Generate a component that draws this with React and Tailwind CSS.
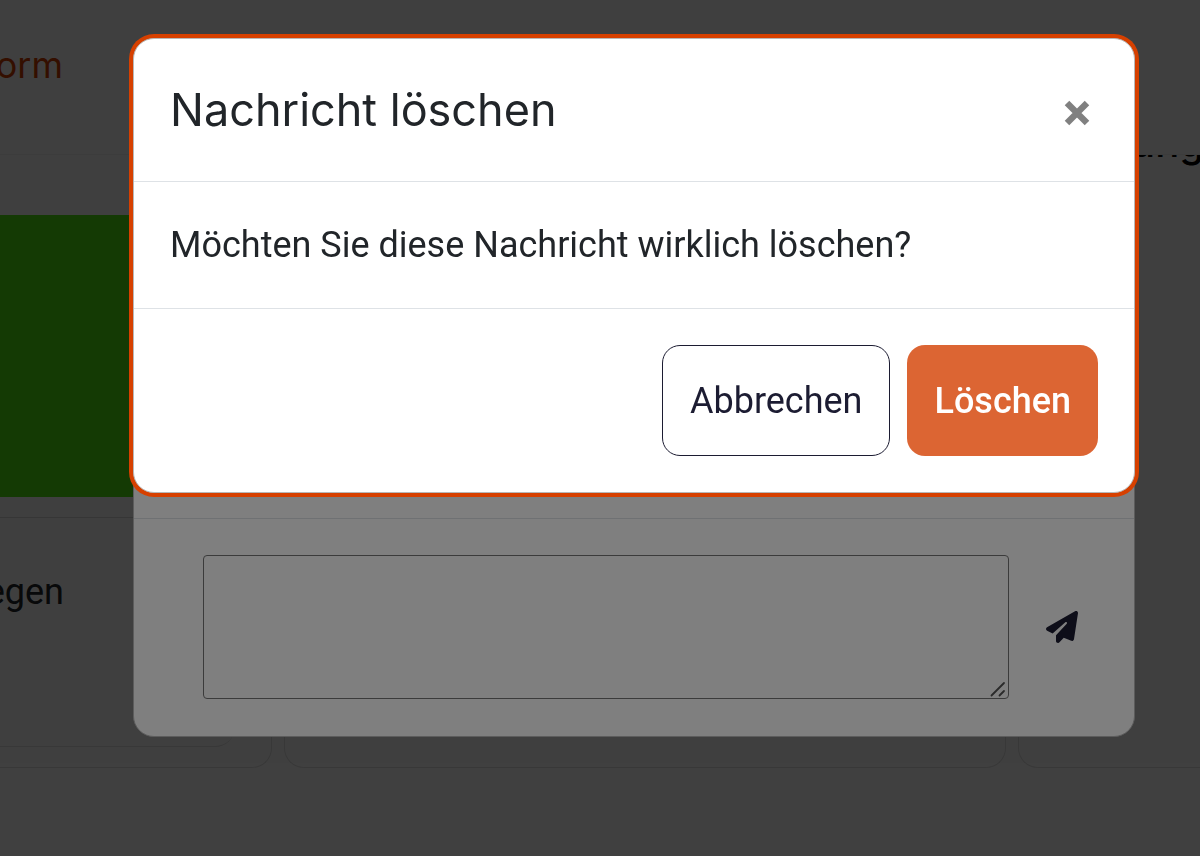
import { FaPaperPlane } from "react-icons/fa6";

function Backdrop() {
  return <div className="fixed inset-0 bg-black/50" />;
}

function PageHeader() {
  return (
    <header className="relative z-10 flex h-[155px] border-b border-[#f0f0f0] bg-white">
      <a href="#form" className="flex w-[63px] justify-end pt-[43px] text-[36px] leading-[44px] text-[#d13f00]">
        orm
      </a>
    </header>
  );
}

function PageContent() {
  return (
    <main className="flex flex-col">
      <div className="flex h-[60px] justify-end">
        <h2 className="-mt-9 -mr-1 text-[40px] leading-[48px] font-medium text-black">ung</h2>
      </div>
      <div className="flex gap-3">
        <section className="-mt-[60px] w-[272px] rounded-br-[20px] border-r border-b border-[#e0e0e0] pt-[60px] pb-5">
          <div className="h-[282px] w-[200px] bg-[#50e810]" />
          <div className="mt-5 h-[230px] w-[235px] rounded-br-[20px] border-b border-[#e0e0e0]">
            <div className="-mr-10 border-t border-[#d8d8d8] pt-[52px]">
              <p className="flex w-16 justify-end font-['Roboto',sans-serif] text-[36px] leading-[44px] text-[#212529]">
                egen
              </p>
            </div>
          </div>
        </section>
        <section className="w-[722px] rounded-b-[20px] border-x border-b border-[#e0e0e0]" />
        <section className="-mr-6 grow rounded-b-[20px] border-x border-b border-[#e0e0e0]" />
      </div>
    </main>
  );
}

function MessageDialog() {
  return (
    <div className="fixed inset-0 flex items-start pt-[38px] pr-[65px] pl-[133px]">
      <section className="grow rounded-[21px] border border-[#b8b8b8] bg-white" aria-label="Nachricht">
        <div className="h-[479px]" />
        <form className="flex items-center border-t border-[#dee2e6] pt-9 pb-[37px] pr-[56px] pl-[69px]">
          <div className="relative flex grow">
            <textarea
              aria-label="Nachricht"
              className="h-[144px] grow resize-none rounded-[4px] border border-[#767676] bg-white p-3 text-[36px] outline-none"
            />
            <svg
              className="absolute right-[3px] bottom-[2px] size-4"
              viewBox="0 0 16 16"
              stroke="#555555"
              strokeWidth="1.8"
              strokeLinecap="round"
            >
              <path d="M1.5 14.5L14 2M9.5 14.5L14 10" />
            </svg>
          </div>
          <button type="button" aria-label="Senden" className="ml-[37px] text-[32px] text-[#1c1c32]">
            <FaPaperPlane />
          </button>
        </form>
      </section>
    </div>
  );
}

function DeleteDialog() {
  return (
    <div className="fixed inset-0 flex items-start pt-[38px] pr-[65px] pl-[133px]">
      <section
        role="dialog"
        aria-labelledby="delete-title"
        className="grow rounded-[21px] border border-[#b8b8b8] bg-white shadow-[0_0_0_4px_#d64000]"
      >
        <header className="flex h-[143px] items-center justify-between border-b border-[#dee2e6] pr-[44px] pl-9">
          <h1 id="delete-title" className="text-[45px] leading-[56px] text-[#212529]">
            Nachricht löschen
          </h1>
          <button type="button" aria-label="Schließen" className="mt-1.5">
            <svg className="size-[26px]" viewBox="0 0 26 26" stroke="#808080" strokeWidth="6.4">
              <path d="M3 3L23 23M23 3L3 23" />
            </svg>
          </button>
        </header>
        <p className="px-9 py-9 font-['Roboto',sans-serif] text-[36px] leading-[54px] text-[#212529]">
          Möchten Sie diese Nachricht wirklich löschen?
        </p>
        <footer className="flex justify-end gap-[17px] border-t border-[#dee2e6] p-9 font-['Roboto',sans-serif] text-[36px] leading-[54px]">
          <button
            type="button"
            className="h-[111px] rounded-[18px] border border-[#1c1c32] bg-white px-[27px] text-[#1c1c32]"
          >
            Abbrechen
          </button>
          <button type="button" className="h-[111px] rounded-[18px] bg-[#dc6533] px-[27px] font-medium text-white">
            Löschen
          </button>
        </footer>
      </section>
    </div>
  );
}

export default function App() {
  return (
    <div className="h-screen overflow-hidden bg-white font-['Inter',sans-serif]">
      <div className="isolate">
        <PageHeader />
        <PageContent />
      </div>
      <Backdrop />
      <MessageDialog />
      <Backdrop />
      <DeleteDialog />
    </div>
  );
}
